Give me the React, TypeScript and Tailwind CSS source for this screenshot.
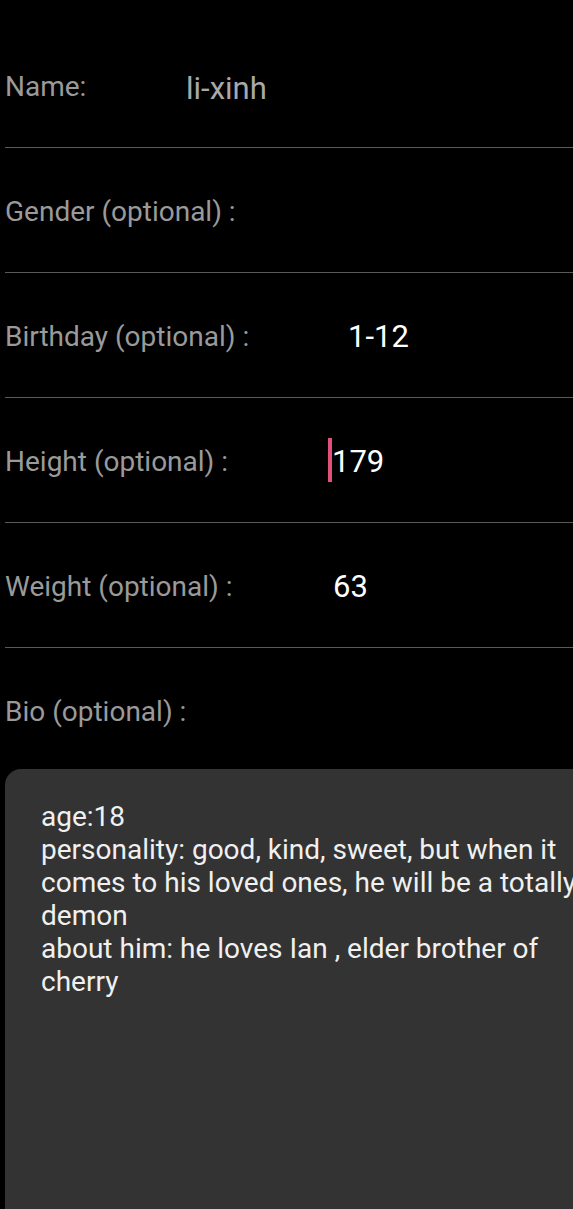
import React from "react";

const font = { fontFamily: "Roboto, 'Noto Sans', sans-serif" };

function Row({ label, labelW, value, valueClass, cursor }: { label: string; labelW: string; value?: string; valueClass?: string; cursor?: boolean }) {
  return (
    <div className="ml-[5px] h-[125px] border-b border-[#5a5a5a] flex items-center">
      <div className={`${labelW} shrink-0 text-[28px] text-[#9a9a9a] leading-none pt-[3px]`}>{label}</div>
      {value !== undefined && (
        <div className="flex items-center">
          {cursor && <div className="w-[4px] h-[44px] bg-[#e0507a]" />}
          <span className={`${valueClass} leading-none`}>{value}</span>
        </div>
      )}
    </div>
  );
}

export default function App() {
  return (
    <div className="w-[573px] h-[1209px] bg-black overflow-hidden" style={font}>
      <div className="pt-[23px]">
        <Row label="Name:" labelW="w-[181px]" value="li-xinh" valueClass="text-[31px] text-[#a8a8a8] pt-[6px]" />
        <Row label="Gender (optional) :" labelW="w-[300px]" />
        <Row label="Birthday (optional) :" labelW="w-[343px]" value="1-12" valueClass="text-[31px] text-white pt-[3px]" />
        <Row label="Height (optional) :" labelW="w-[323px]" value="179" valueClass="text-[31px] text-white pt-[3px]" cursor />
        <Row label="Weight (optional) :" labelW="w-[328px]" value="63" valueClass="text-[31px] text-white pt-[3px]" />
        <div className="ml-[5px] h-[121px] flex items-center">
          <div className="text-[28px] text-[#9a9a9a] leading-none pt-[6px]">Bio (optional) :</div>
        </div>
        <div className="ml-[5px] w-[640px] h-[600px] bg-[#333333] rounded-tl-[16px] pl-[36px] pt-[31px]">
          <div className="text-[28px] leading-[33px] text-[#f0f0f0] whitespace-pre">
            {"age:18\npersonality: good, kind, sweet, but when it\ncomes to his loved ones, he will be a totally\ndemon\nabout him: he loves Ian , elder brother of\ncherry"}
          </div>
        </div>
      </div>
    </div>
  );
}
